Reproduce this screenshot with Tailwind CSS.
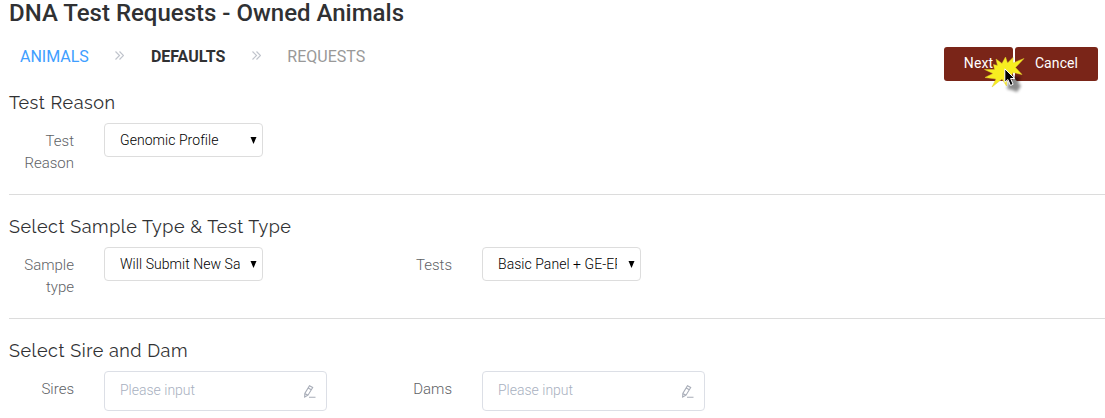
<!DOCTYPE html>
<html lang="en">
<head>
  <meta charset="UTF-8" />
  <meta name="viewport" content="width=device-width, initial-scale=1.0" />
  <title>DNA Test Requests - Owned Animals</title>
  <script src="https://cdn.jsdelivr.net/npm/@tailwindcss/browser@4"></script>
</head>
<body class="bg-white h-[418px] overflow-hidden font-['Roboto',sans-serif] text-sm font-light text-[#606266]">

  <!-- Header -->
  <header class="h-[92px] pl-[9px] pr-[7px]">
    <h1 class="text-2xl leading-[26px] font-medium text-[#303133] whitespace-nowrap">DNA Test Requests - Owned Animals</h1>

    <div class="flex justify-between">
      <nav class="flex items-center h-5 mt-[21px] ml-[11px] text-base font-normal">
        <a class="text-[#409eff]">ANIMALS</a>
        <svg class="w-[9px] h-[9px] ml-[26px] mr-[27px] -mt-1" viewBox="0 0 9 9" fill="none" stroke="#c0c4cc" stroke-width="1.2"><path d="M.5.5l4 4-4 4M4.5.5l4 4-4 4" /></svg>
        <a class="font-bold text-[#303133]">DEFAULTS</a>
        <svg class="w-[9px] h-[9px] ml-[27px] mr-[26px] -mt-1" viewBox="0 0 9 9" fill="none" stroke="#c0c4cc" stroke-width="1.2"><path d="M.5.5l4 4-4 4M4.5.5l4 4-4 4" /></svg>
        <a class="text-[#999]">REQUESTS</a>
      </nav>

      <div class="relative flex gap-[2px] mt-[21px] text-sm font-normal tracking-[0.1px] text-white">
        <button class="w-[69px] h-[34px] pb-[2px] rounded-[3px] bg-[#7a2518]">Next</button>
        <button class="w-[83px] h-[34px] pb-[2px] rounded-[3px] bg-[#7a2518]">Cancel</button>
        <!-- Click burst with pointer -->
        <svg class="absolute left-[36px] top-[3px] w-[50px] h-[50px]" viewBox="0 0 50 50">
          <defs>
            <filter id="soft" x="-50%" y="-50%" width="200%" height="200%"><feGaussianBlur stdDeviation="1.8" /></filter>
          </defs>
          <path d="M32 26L41 27L38 32L41 36L37 42L32 40L27 39L29 30Z" fill="#000" opacity=".45" filter="url(#soft)" />
          <path d="M13.500 14.500L17.500 15.500L16 9L22 13.500L25.500 7L27.500 13L33 7.500L33 13L44 8.500L35.500 17.500L42 24.500L33 22.500L30 28L26.500 28L26.500 36L22 29L12 37L16 29L5 27.500L13 23.500L4.500 19.500L14.500 19.500Z" fill="#f8ee20" stroke="#e2cf30" stroke-width=".5" />
          <path d="M24.800 18.800V32.300L27.900 29.500L30.500 35.500L33.100 34.300L30.600 28.500H34.600Z" fill="#000" stroke="#fff" stroke-width="1" />
        </svg>
      </div>
    </div>
  </header>

  <main class="ml-[9px]">
    <!-- Test reason -->
    <section class="h-[103px] border-b border-[#dcdcdc]">
      <h2 class="h-[31px] font-['Raleway','Lato',sans-serif] text-lg leading-[22px] font-normal tracking-[0.54px] text-[#303133]">Test Reason</h2>
      <div class="flex">
        <label class="w-[65px] pt-[7px] text-right leading-[22px] text-[15px]">Test<br>Reason</label>
        <div class="flex items-center w-[159px] h-[34px] ml-[30px] pl-[15px] pr-[5px] rounded-[4px] border border-[#ddd] text-black">
          <span class="w-[120px] overflow-hidden whitespace-nowrap text-sm tracking-[0.05px]">Genomic Profile</span>
          <svg class="w-[7px] h-[7px] ml-auto" viewBox="0 0 7 7"><path d="M.5 0H6.500L3.500 7Z" /></svg>
        </div>
      </div>
    </section>

    <!-- Sample and test type -->
    <section class="h-[124px] pt-[21px] border-b border-[#dcdcdc]">
      <h2 class="h-[31px] font-['Raleway','Lato',sans-serif] text-lg leading-[22px] font-normal tracking-[0.54px] text-[#303133]">Select Sample Type &amp; Test Type</h2>
      <div class="flex">
        <label class="w-[65px] pt-[7px] text-right leading-[22px] text-[15px]">Sample<br>type</label>
        <div class="flex items-center w-[159px] h-[34px] ml-[30px] pl-[15px] pr-[5px] rounded-[4px] border border-[#ddd] text-black">
          <span class="w-[120px] overflow-hidden whitespace-nowrap text-sm tracking-[0.05px]">Will Submit New Sa</span>
          <svg class="w-[7px] h-[7px] ml-auto" viewBox="0 0 7 7"><path d="M.5 0H6.500L3.500 7Z" /></svg>
        </div>
        <label class="w-[189px] pt-[7px] text-right leading-[22px] text-[15px]">Tests</label>
        <div class="flex items-center w-[159px] h-[34px] ml-[30px] pl-[15px] pr-[5px] rounded-[4px] border border-[#ddd] text-black">
          <span class="w-[119px] overflow-hidden whitespace-nowrap text-sm tracking-[0.05px]">Basic Panel + GE-EPD</span>
          <svg class="w-[7px] h-[7px] ml-auto" viewBox="0 0 7 7"><path d="M.5 0H6.500L3.500 7Z" /></svg>
        </div>
      </div>
    </section>

    <!-- Sire and dam -->
    <section class="pt-[21px]">
      <h2 class="h-[31px] font-['Raleway','Lato',sans-serif] text-lg leading-[22px] font-normal tracking-[0.54px] text-[#303133]">Select Sire and Dam</h2>
      <div class="flex">
        <label class="w-[65px] pt-[7px] text-right leading-[22px] text-[15px]">Sires</label>
        <div class="flex items-center w-[223px] h-10 ml-[30px] pl-[15px] pr-[10px] rounded-[4px] border border-[#dcdfe6] text-[#a8b0c0]">
          <span class="-mt-[2px] text-sm">Please input</span>
          <svg class="w-[13px] h-[13px] ml-auto" viewBox="0 0 13 13" fill="none" stroke="#a8adb8" stroke-width="1.1"><path d="M6.500.7L9.700 2.500L5 10.200L1.700 12L1.800 8.400ZM5.200 2.900L8.300 4.700M1.800 8.400L5 10.200M6 12.300H12.500" /></svg>
        </div>
        <label class="w-[125px] pt-[7px] text-right leading-[22px] text-[15px]">Dams</label>
        <div class="flex items-center w-[223px] h-10 ml-[30px] pl-[15px] pr-[10px] rounded-[4px] border border-[#dcdfe6] text-[#a8b0c0]">
          <span class="-mt-[2px] text-sm">Please input</span>
          <svg class="w-[13px] h-[13px] ml-auto" viewBox="0 0 13 13" fill="none" stroke="#a8adb8" stroke-width="1.1"><path d="M6.500.7L9.700 2.500L5 10.200L1.700 12L1.800 8.400ZM5.200 2.900L8.300 4.700M1.800 8.400L5 10.200M6 12.300H12.500" /></svg>
        </div>
      </div>
    </section>
  </main>

</body>
</html>
